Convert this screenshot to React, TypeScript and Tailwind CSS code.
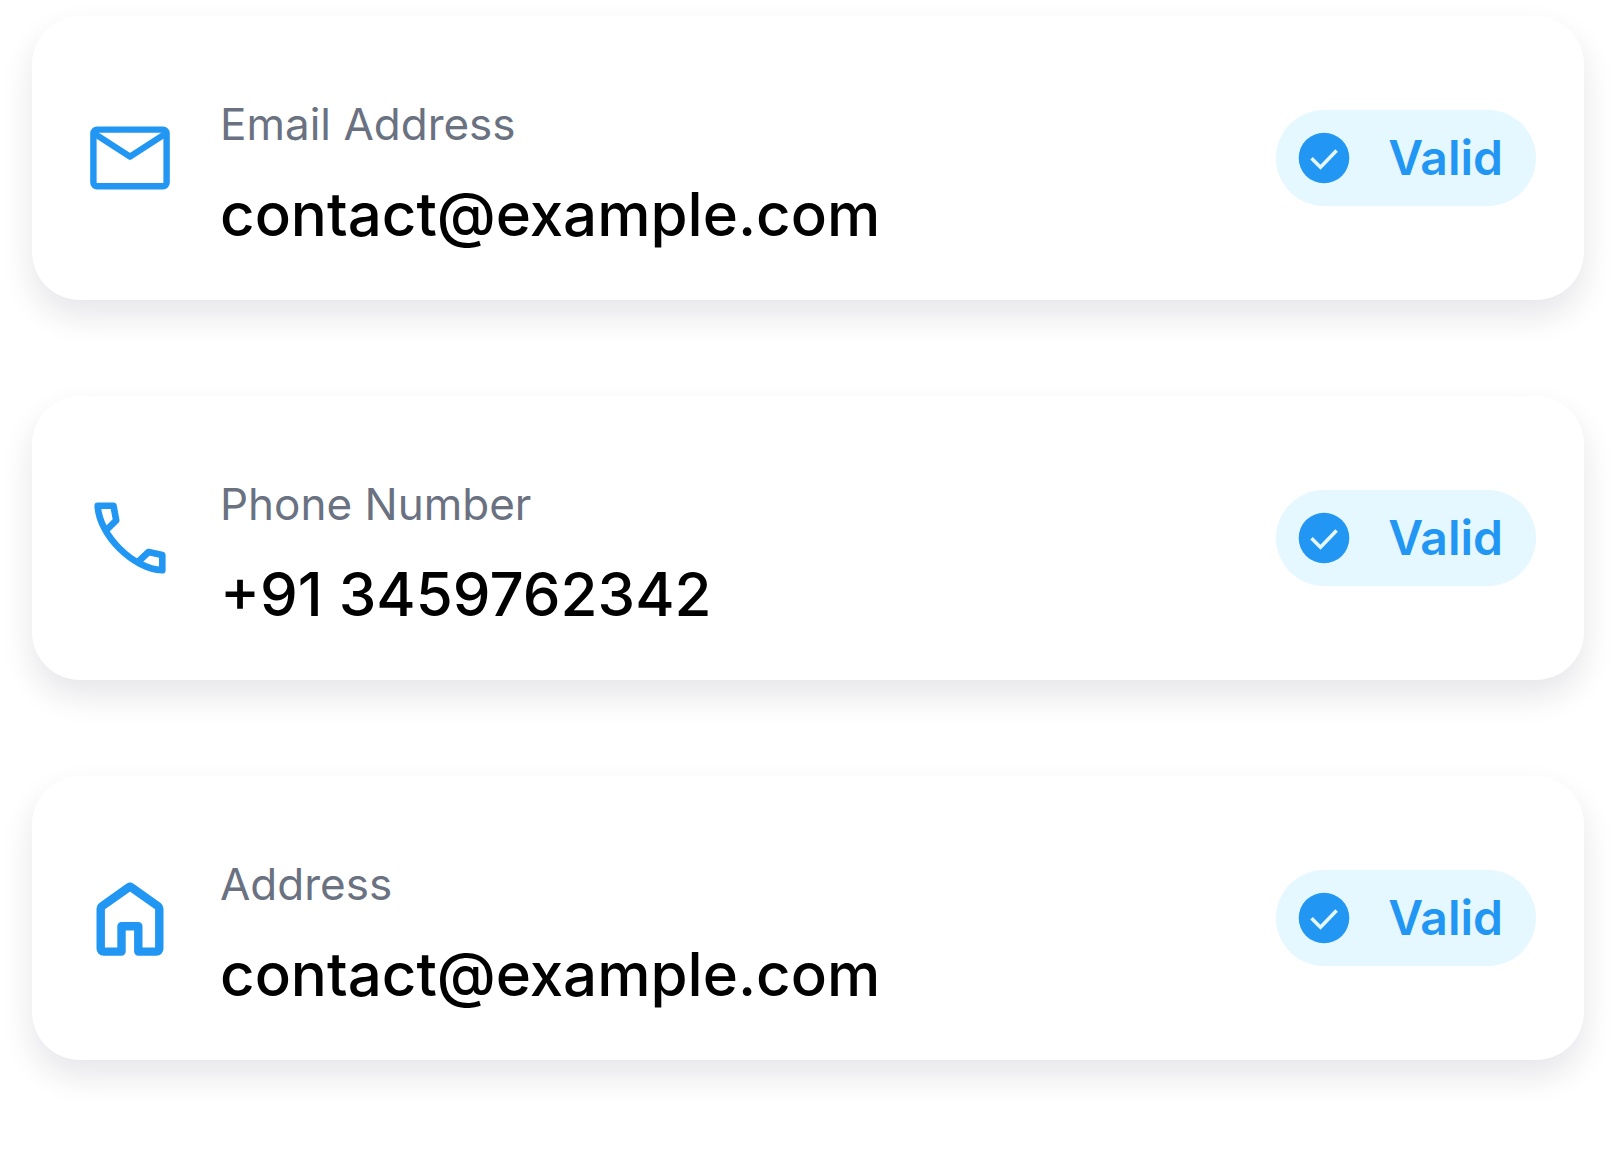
import type { ReactNode } from 'react';

interface ContactField {
  id: string;
  label: string;
  value: string;
  icon: ReactNode;
}

const MailIcon = () => (
  <svg viewBox="0 0 100 100" fill="none" stroke="currentColor" strokeWidth="6.4" strokeLinejoin="round" className="size-full" aria-hidden="true">
    <rect x="13.4" y="21.6" width="73.2" height="56.6" rx="3.6" />
    <path d="M14 25.4 50 48.6 86 25.4" />
  </svg>
);

const PhoneIcon = () => (
  <svg viewBox="0 0 100 100" fill="none" stroke="currentColor" strokeWidth="6.6" strokeLinejoin="round" className="size-full" aria-hidden="true">
    <path d="M26.5 42 36.2 32.3 33.5 17.8H17.7C19 47 53 81 82.3 82.3V67L68.5 64 58.5 73.5" />
  </svg>
);

const HomeIcon = () => (
  <svg viewBox="0 0 100 100" fill="none" stroke="currentColor" strokeWidth="8.4" strokeLinejoin="round" className="size-full" aria-hidden="true">
    <path d="M20.7 40.5Q20.7 39.2 21.8 38.4L48.8 19.3Q50 18.4 51.2 19.3L78.2 38.4Q79.3 39.2 79.3 40.5V80.5Q79.3 83.6 76.2 83.6H58.3V58.2H41.5V83.6H23.8Q20.7 83.6 20.7 80.5Z" />
  </svg>
);

const CheckIcon = () => (
  <svg viewBox="0 0 60 60" fill="none" className="size-15 shrink-0" aria-hidden="true">
    <circle cx="30" cy="30" r="25.3" fill="currentColor" />
    <path d="M17.5 30.2 26.5 39.2 42.6 22.6" stroke="#e5f7ff" strokeWidth="3.6" />
  </svg>
);

const fields: ContactField[] = [
  { id: 'email', label: 'Email Address', value: 'contact@example.com', icon: <MailIcon /> },
  { id: 'phone', label: 'Phone Number', value: '+91 3459762342', icon: <PhoneIcon /> },
  { id: 'address', label: 'Address', value: 'contact@example.com', icon: <HomeIcon /> },
];

function ValidBadge() {
  return (
    <div className="flex h-24 shrink-0 items-center gap-[34px] rounded-full bg-[#e5f7ff] pl-[18px] pr-[33px] text-[#2196f3]">
      <CheckIcon />
      <span className="text-[48px] leading-[60px] font-semibold">Valid</span>
    </div>
  );
}

function ContactCard({ field }: { field: ContactField }) {
  return (
    <li className="flex items-center gap-10 rounded-[48px] bg-white p-12 shadow-[0_16px_32px_rgba(28,28,56,0.11)]">
      <div className="size-[100px] shrink-0 text-[#2196f3]">{field.icon}</div>
      <div className="flex min-w-0 flex-1 flex-col gap-6 pt-7 pb-1">
        <p className="text-[44px] leading-[64px] text-gray-500">{field.label}</p>
        <p className="text-[60px] leading-[68px] font-medium text-black">{field.value}</p>
      </div>
      <ValidBadge />
    </li>
  );
}

export default function App() {
  return (
    <main className="min-h-screen bg-white px-8 pt-4 pb-24 font-['Inter',sans-serif]">
      <ul className="flex flex-col gap-24">
        {fields.map((field) => (
          <ContactCard key={field.id} field={field} />
        ))}
      </ul>
    </main>
  );
}
